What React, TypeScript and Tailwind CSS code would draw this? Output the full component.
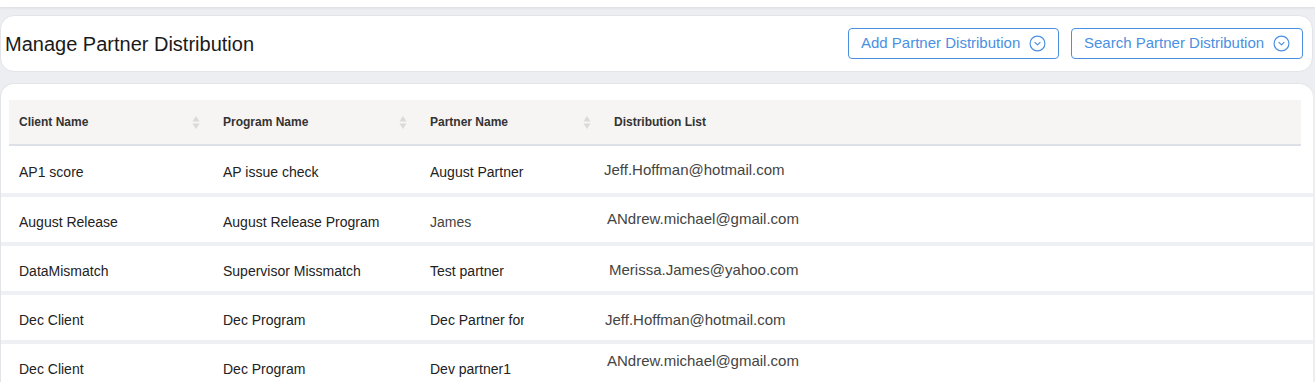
import React from "react";

type Row = {
  client: string;
  program: string;
  partner: string;
  email: string;
  emailCls: string;
};

const rows: Row[] = [
  { client: "AP1 score", program: "AP issue check", partner: "August Partner", email: "Jeff.Hoffman@hotmail.com", emailCls: "pl-[1px] -mt-[4px]" },
  { client: "August Release", program: "August Release Program", partner: "James", email: "ANdrew.michael@gmail.com", emailCls: "pl-[4px] -mt-[6px]" },
  { client: "DataMismatch", program: "Supervisor Missmatch", partner: "Test partner", email: "Merissa.James@yahoo.com", emailCls: "pl-[6px] -mt-[2px]" },
  { client: "Dec Client", program: "Dec Program", partner: "Dec Partner for", email: "Jeff.Hoffman@hotmail.com", emailCls: "pl-[2px] mt-0" },
  { client: "Dec Client", program: "Dec Program", partner: "Dev partner1", email: "ANdrew.michael@gmail.com", emailCls: "pl-[4px] -mt-[16px]" },
];

const SortIcon = () => (
  <svg width="8" height="15" viewBox="0 0 8 15" className="shrink-0">
    <path d="M4 1 L7.5 6.5 H0.5 Z" fill="#dadada" />
    <path d="M4 14 L7.5 8.5 H0.5 Z" fill="#dadada" />
  </svg>
);

const CircleChevron = () => (
  <svg width="17" height="17" viewBox="0 0 16 16" fill="none" stroke="#4a90e2" strokeWidth="1.1">
    <circle cx="8" cy="8" r="7" />
    <path d="M5.6 7 L8 9.3 L10.4 7" strokeLinecap="round" strokeLinejoin="round" />
  </svg>
);

const HeadCell = ({ label, w, sort }: { label: string; w: string; sort: boolean }) => (
  <div className={`${w} flex items-center justify-between pr-[12px]`}>
    <span className="text-[12px] font-bold text-[#333]">{label}</span>
    {sort && <SortIcon />}
  </div>
);

export default function App() {
  return (
    <div
      className="w-[1315px] h-[382px] overflow-hidden bg-[#eceef1] flex flex-col"
      style={{ fontFamily: '"Liberation Sans", Arial, sans-serif' }}
    >
      <div className="h-[7px] bg-white shadow-[0_1px_3px_rgba(0,0,0,0.08)] shrink-0" />

      <div className="mt-[8px] w-[1313px] h-[57px] shrink-0 bg-white rounded-[14px] border border-[#e2e4e8] flex items-center justify-between pl-[4px] pr-[9px]">
        <h1 className="text-[20px] text-[#1a1a1a]">Manage Partner Distribution</h1>
        <div className="flex items-center gap-[12px]">
          <button className="h-[31px] w-[211px] flex items-center justify-between pl-[12px] pr-[12px] border border-[#4a90e2] rounded-[4px] text-[15px] text-[#4a90e2]">
            Add Partner Distribution
            <CircleChevron />
          </button>
          <button className="h-[31px] w-[232px] flex items-center justify-between pl-[12px] pr-[12px] border border-[#4a90e2] rounded-[4px] text-[15px] text-[#4a90e2]">
            Search Partner Distribution
            <CircleChevron />
          </button>
        </div>
      </div>

      <div className="mt-[11px] w-[1313px] flex-1 bg-white rounded-t-[14px] border-t border-l border-[#e2e4e8] pt-[16px]">
        <div className="mx-[8px] w-[1292px] h-[46px] bg-[#f6f5f3] border-b-2 border-[#dde1e6] flex">
          <div className="w-[203px] pl-[10px] flex">
            <HeadCell label="Client Name" w="flex-1" sort />
          </div>
          <div className="w-[207px] pl-[11px] flex">
            <HeadCell label="Program Name" w="flex-1" sort />
          </div>
          <div className="w-[184px] pl-[11px] flex">
            <HeadCell label="Partner Name" w="flex-1" sort />
          </div>
          <div className="flex-1 pl-[11px] flex">
            <HeadCell label="Distribution List" w="flex-1" sort={false} />
          </div>
        </div>

        {rows.map((r, i) => (
          <div
            key={i}
            className={`flex items-center text-[14px] text-[#222] pt-[6px] ${
              i === 0 ? "h-[47px]" : "h-[49px] border-t-4 border-[#eff0f3]"
            }`}
          >
            <div className="w-[211px] pl-[18px]">{r.client}</div>
            <div className="w-[207px] pl-[11px]">{r.program}</div>
            <div className={`w-[184px] pl-[11px] ${i === 1 ? "text-[#444]" : ""}`}>
              <div className="max-w-[94px] overflow-hidden whitespace-nowrap">{r.partner}</div>
            </div>
            <div className={`flex-1 text-[15px] text-[#444] ${r.emailCls}`}>{r.email}</div>
          </div>
        ))}
      </div>
    </div>
  );
}
